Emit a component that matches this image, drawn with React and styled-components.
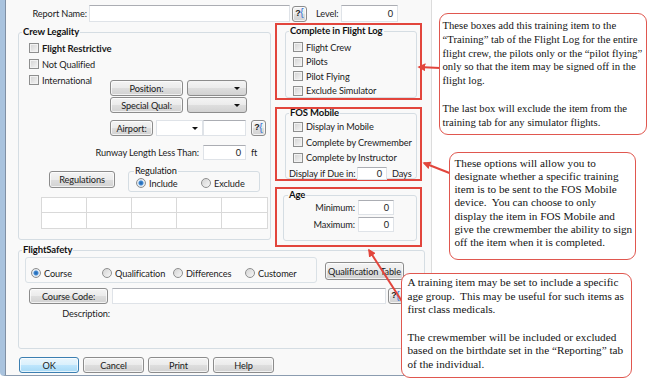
import React from 'react'
import styled, { createGlobalStyle } from 'styled-components'

const GlobalStyle = createGlobalStyle`
  html, body { margin: 0; padding: 0; background: #fff; }
  body {
    font-family: Lato, "Liberation Sans", sans-serif;
    font-size: 9.2px;
    letter-spacing: -0.1px;
    color: #1b1b1b;
  }
  * { box-sizing: border-box; }
`

const Page = styled.div`
  position: relative;
  width: 649px;
  height: 384px;
  overflow: hidden;
  background: #fff;
`

const Dialog = styled.div`
  width: 432px;
  height: 376px;
  display: flex;
  flex-direction: column;
  background: #f9f9f9;
  border-left: 5px solid #a9c3de;
  border-right: 1px solid #dcdcdc;
  border-bottom: 1px solid #8b9cb0;
  border-bottom-left-radius: 4px;
  box-shadow: inset 1px 0 0 #8090a4;
`

const Body = styled.div`
  display: flex;
  flex-direction: column;
  padding-top: 5px;
`

const Row = styled.div`
  display: flex;
  align-items: center;
  flex: none;
  height: ${p => p.$h || 16}px;
  margin: ${p => p.$m || 0};
`

const Label = styled.span`
  flex: none;
  width: ${p => (p.$w ? `${p.$w}px` : 'auto')};
  margin: ${p => p.$m || 0};
  text-align: ${p => (p.$left ? 'left' : 'right')};
  white-space: nowrap;
`

const TextBox = styled.div`
  flex: none;
  width: ${p => p.$w}px;
  height: ${p => p.$h || 16}px;
  margin: ${p => p.$m || 0};
  display: flex;
  align-items: center;
  justify-content: flex-end;
  padding-right: 4px;
  background: #fff;
  border: 1px solid #dfe3e8;
  border-top-color: #abadb3;
`

const Button = styled.div`
  flex: none;
  width: ${p => p.$w}px;
  height: ${p => p.$h || 16}px;
  margin: ${p => p.$m || 0};
  display: flex;
  align-items: center;
  justify-content: center;
  white-space: nowrap;
  overflow: hidden;
  border: 1px solid ${p => (p.$default ? '#3c7fb1' : '#8c8c8c')};
  border-radius: 3px;
  background: ${p =>
    p.$default
      ? 'linear-gradient(#eaf6fd, #d9f0fc 50%, #bee6fd 51%, #a7d9f5)'
      : 'linear-gradient(#f4f4f4, #ebebeb 50%, #dedede 51%, #d2d2d2)'};
  box-shadow: inset 0 0 0 1px rgba(255, 255, 255, 0.7);
`

const HelpButton = styled(Button)`
  padding: 0 0 1px 0;
  font-family: "Liberation Sans", sans-serif;
  font-weight: bold;
  font-size: 9px;
  letter-spacing: 0;
  line-height: 1;
`

const Brace = styled.span`
  color: #2f6fd6;
  font-weight: normal;
  font-size: 10px;
  margin-left: -0.5px;
`

const Combo = styled.div`
  flex: none;
  width: ${p => p.$w}px;
  height: 16px;
  margin: ${p => p.$m || 0};
  display: flex;
  align-items: center;
  justify-content: flex-end;
  padding-right: ${p => p.$pr || 6}px;
  border: 1px solid ${p => (p.$flat ? '#dfe3e8' : '#8c8c8c')};
  border-radius: ${p => (p.$flat ? 0 : 3)}px;
  background: ${p =>
    p.$flat ? '#fff' : 'linear-gradient(#f4f4f4, #ebebeb 50%, #dedede 51%, #d2d2d2)'};
`

const DropArrow = styled.span`
  width: 0;
  height: 0;
  border-left: 3px solid transparent;
  border-right: 3px solid transparent;
  border-top: 3px solid #111;
`

const Group = styled.fieldset`
  flex: none;
  min-width: 0;
  width: ${p => (p.$w ? `${p.$w}px` : 'auto')};
  height: ${p => p.$h}px;
  margin: ${p => p.$m || 0};
  padding: 0 0 0 ${p => p.$pl ?? 3}px;
  border: 1px solid #d5dde3;
  border-radius: 3px;
  display: flex;
  flex-direction: column;
`

const Title = styled.legend`
  padding: 0 1px;
  font-size: ${p => (p.$plain ? '9.2px' : '9.5px')};
  line-height: 12px;
  font-weight: ${p => (p.$plain ? 'normal' : 'bold')};
  color: #111;
`

const CheckRow = styled.div`
  flex: none;
  display: flex;
  align-items: center;
  gap: 3px;
  height: ${p => p.$h || 16}px;
  width: ${p => (p.$w ? `${p.$w}px` : 'auto')};
  margin: ${p => p.$m || 0};
  font-weight: ${p => (p.$bold ? 'bold' : 'normal')};
  font-size: ${p => (p.$bold ? '9.5px' : 'inherit')};
  white-space: nowrap;
`

const Box = styled.span`
  flex: none;
  width: 10px;
  height: 10px;
  border: 1px solid #8e8f8f;
  background: linear-gradient(135deg, #d2d2d2, #f6f6f6);
  box-shadow: inset 0 0 0 1px #f2f2f2;
`

const RadioDot = styled.span`
  flex: none;
  width: 10px;
  height: 10px;
  border-radius: 50%;
  border: 1px solid #8e8f8f;
  background: ${p =>
    p.$on
      ? 'radial-gradient(circle, #1f5fa6 0, #3f8ad6 2px, #e8eef4 3px, #d8dde3 5px)'
      : 'linear-gradient(135deg, #d4d4d4, #f7f7f7)'};
`

const CrewCol = styled.div`
  display: flex;
  flex-direction: column;
  align-self: flex-start;
`

const PosBlock = styled.div`
  display: flex;
  flex-direction: column;
  align-self: flex-start;
  gap: 1px;
  margin-top: 8px;
`

const CellGrid = styled.div`
  flex: none;
  display: grid;
  grid-template-columns: repeat(5, 1fr);
  grid-template-rows: repeat(2, 15px);
  width: 227px;
  margin: 5px 0 0 19px;
  border: 1px solid #d9d9d9;
  background: #fff;
`

const Cell = styled.div`
  border-right: 1px solid #d9d9d9;
  border-bottom: 1px solid #d9d9d9;
  &:nth-child(5n) { border-right: none; }
  &:nth-child(n + 6) { border-bottom: none; }
`

const MainGrid = styled.div`
  display: grid;
  grid-template-columns: 253px 147px;
  column-gap: 4px;
  align-items: start;
  margin: 1px 0 0 13px;
`

const SideCol = styled.div`
  display: flex;
  flex-direction: column;
`

const Highlight = styled.div`
  flex: none;
  height: ${p => p.$h}px;
  margin: ${p => p.$m || 0};
  padding: 0 3px 0 ${p => p.$pl || 8}px;
  border: 2px solid #e2453c;
  display: flex;
  flex-direction: column;
`

const RadioBox = styled.div`
  flex: none;
  display: flex;
  align-items: center;
  width: 292px;
  height: 26px;
  margin-left: 3px;
  padding: 6px 0 0 5px;
  border: 1px solid #dae1e6;
  border-radius: 3px;
`

const RadioItem = styled.div`
  flex: none;
  display: flex;
  align-items: center;
  gap: 3px;
  width: ${p => (p.$w ? `${p.$w}px` : 'auto')};
  white-space: nowrap;
`

const ButtonBar = styled.div`
  margin-top: auto;
  height: 26px;
  display: flex;
  gap: 4px;
  padding: 8px 0 0 14px;
`

const Callout = styled.div`
  position: absolute;
  left: ${p => p.$x}px;
  top: ${p => p.$y}px;
  width: ${p => p.$w}px;
  height: ${p => p.$h}px;
  padding: ${p => p.$pad};
  background: #fff;
  border: 1.5px solid #e0574f;
  border-radius: 9px;
  font-family: "Liberation Serif", "Times New Roman", serif;
  font-size: ${p => p.$fs || 11.2}px;
  line-height: ${p => p.$lh}px;
  letter-spacing: 0;
  color: #141414;
  white-space: pre;
`

const Arrows = styled.svg`
  position: absolute;
  left: 0;
  top: 0;
  pointer-events: none;
`

const Check = ({ children, ...rest }) => (
  <CheckRow {...rest}>
    <Box />
    {children}
  </CheckRow>
)

const Radio = ({ on, children, w }) => (
  <RadioItem $w={w}>
    <RadioDot $on={on} />
    {children}
  </RadioItem>
)

const Help = ({ m }) => (
  <HelpButton $w={15} $m={m}>
    ?<Brace>{'{'}</Brace>
  </HelpButton>
)

const note1 = `These boxes add this training item to the
“Training” tab of the Flight Log for the entire
flight crew, the pilots only or the “pilot flying”
only so that the item may be signed off in the
flight log.

The last box will exclude the item from the
training tab for any simulator flights.`

const note2 = `These options will allow you to
designate whether a specific training
item is to be sent to the FOS Mobile
device.  You can choose to only
display the item in FOS Mobile and
give the crewmember the ability to sign
off the item when it is completed.`

const note3 = `A training item may be set to include a specific
age group.  This may be useful for such items as
first class medicals.

The crewmember will be included or excluded
based on the birthdate set in the “Reporting” tab
of the individual.`

export default function App() {
  return (
    <Page>
      <GlobalStyle />
      <Dialog>
        <Body>
          <Row $h={17}>
            <Label $w={82} $m="0 2px 0 0">Report Name:</Label>
            <TextBox $w={201} $h={17} />
            <Help m="0 0 0 2px" />
            <Label $left $w={22} $m="0 3px 0 9px">Level:</Label>
            <TextBox $w={57} $h={17}>0</TextBox>
          </Row>

          <MainGrid>
            <Group $h={214} $m="3px 0 0 0">
              <Title>Crew Legality</Title>
              <Check $bold $m="2px 0 0 7px">Flight Restrictive</Check>
              <Check $m="0 0 0 7px">Not Qualified</Check>
              <Row $h={41}>
                <CrewCol>
                  <Check $w={81} $m="0 0 0 7px">International</Check>
                </CrewCol>
                <PosBlock>
                  <Row>
                    <Button $w={73}>Position:</Button>
                    <Combo $w={60} $m="0 0 0 4px"><DropArrow /></Combo>
                  </Row>
                  <Row>
                    <Button $w={73}>Special Qual:</Button>
                    <Combo $w={60} $m="0 0 0 4px"><DropArrow /></Combo>
                  </Row>
                </PosBlock>
              </Row>
              <Row $m="7px 0 0 88px">
                <Button $w={43}>Airport:</Button>
                <Combo $flat $w={47} $pr={4} $m="0 0 0 3px"><DropArrow /></Combo>
                <TextBox $w={43} />
                <Help m="0 0 0 5px" />
              </Row>
              <Row $h={15} $m="9px 0 0 0">
                <Label $w={177} $m="0 4px 0 0">Runway Length Less Than:</Label>
                <TextBox $w={43} $h={15}>0</TextBox>
                <Label $left $m="0 0 0 5px">ft</Label>
              </Row>
              <Row $h={27} $m="5px 0 0 0" style={{ alignItems: 'flex-start' }}>
                <Button $w={66} $h={17} $m="6px 0 0 27px">Regulations</Button>
                <Group $w={132} $h={27} $pl={5} $m="0 0 0 13px">
                  <Title $plain>Regulation</Title>
                  <Row $h={12} $m="0 0 0 2px">
                    <Radio on w={65}>Include</Radio>
                    <Radio>Exclude</Radio>
                  </Row>
                </Group>
              </Row>
              <CellGrid>
                {Array.from({ length: 10 }, (_, i) => <Cell key={i} />)}
              </CellGrid>
            </Group>

            <SideCol>
              <Highlight $h={77}>
                <Group $h={73}>
                  <Title>Complete in Flight Log</Title>
                  <Check $h={14.5} $m="3px 0 0 4px">Flight Crew</Check>
                  <Check $h={14.5} $m="0 0 0 4px">Pilots</Check>
                  <Check $h={14.5} $m="0 0 0 4px">Pilot Flying</Check>
                  <Check $h={14.5} $m="0 0 0 4px">Exclude Simulator</Check>
                </Group>
              </Highlight>
              <Highlight $h={74} $m="7px 0 0 0">
                <Group $h={72} $m="-2px 0 0 0">
                  <Title>FOS Mobile</Title>
                  <Check $h={15.5} $m="0 0 0 4px">Display in Mobile</Check>
                  <Check $h={15.5} $m="0 0 0 4px">Complete by Crewmember</Check>
                  <Check $h={15.5} $m="0 0 0 4px">Complete by Instructor</Check>
                  <Row $h={15}>
                    <Label $left $w={68}>Display if Due in:</Label>
                    <TextBox $w={30} $h={13}>0</TextBox>
                    <Label $left $m="0 0 0 5px">Days</Label>
                  </Row>
                </Group>
              </Highlight>
              <Highlight $h={60} $pl={6} $m="6px 0 -3px 0">
                <Group $h={52} $pl={4}>
                  <Title>Age</Title>
                  <Row $h={17} $m="-2px 0 0 0">
                    <Label $w={67} $m="0 3px 0 0">Minimum:</Label>
                    <TextBox $w={36} $h={15}>0</TextBox>
                  </Row>
                  <Row $h={17}>
                    <Label $w={67} $m="0 3px 0 0">Maximum:</Label>
                    <TextBox $w={36} $h={15}>0</TextBox>
                  </Row>
                </Group>
              </Highlight>
            </SideCol>
          </MainGrid>

          <Group $w={407} $h={105} $m="0 0 0 13px">
            <Title>FlightSafety</Title>
            <Row $h={26} $m="1px 0 0 0" style={{ alignItems: 'flex-start' }}>
              <RadioBox>
                <Radio on w={71}>Course</Radio>
                <Radio w={71}>Qualification</Radio>
                <Radio w={72}>Differences</Radio>
                <Radio>Customer</Radio>
              </RadioBox>
              <Button $w={79} $h={18} $m="5px 0 0 8px">Qualification Table</Button>
            </Row>
            <Row $m="5px 0 0 0">
              <Button $w={79} $m="0 0 0 7px">Course Code:</Button>
              <TextBox $w={274} $m="0 0 0 4px" />
              <Help m="0 0 0 2px" />
            </Row>
            <Row $h={12} $m="3px 0 0 0">
              <Label $w={88}>Description:</Label>
            </Row>
          </Group>
        </Body>

        <ButtonBar>
          <Button $default $w={60}>OK</Button>
          <Button $w={61}>Cancel</Button>
          <Button $w={61}>Print</Button>
          <Button $w={61}>Help</Button>
        </ButtonBar>
      </Dialog>

      <Arrows width="649" height="384" viewBox="0 0 649 384">
        <defs>
          <marker id="head" viewBox="0 0 10 10" refX="8" refY="5" markerWidth="4" markerHeight="4" orient="auto">
            <path d="M0,0 L10,5 L0,10 z" fill="#e2453c" />
          </marker>
        </defs>
        <g stroke="#e2453c" strokeWidth="2" fill="none" markerEnd="url(#head)">
          <line x1="440" y1="68" x2="419" y2="67" />
          <line x1="452" y1="174" x2="424" y2="163" />
          <line x1="403" y1="303" x2="369" y2="250" />
        </g>
      </Arrows>

      <Callout $x={439} $y={13} $w={208} $h={122} $fs={10.7} $lh={13.8} $pad="5px 0 0 2.5px">{note1}</Callout>
      <Callout $x={449} $y={152} $w={187} $h={108} $lh={13.3} $pad="3.5px 0 0 4.5px">{note2}</Callout>
      <Callout $x={401} $y={273} $w={231} $h={105} $lh={13.6} $pad="2.2px 0 0 5.5px">{note3}</Callout>
    </Page>
  )
}
